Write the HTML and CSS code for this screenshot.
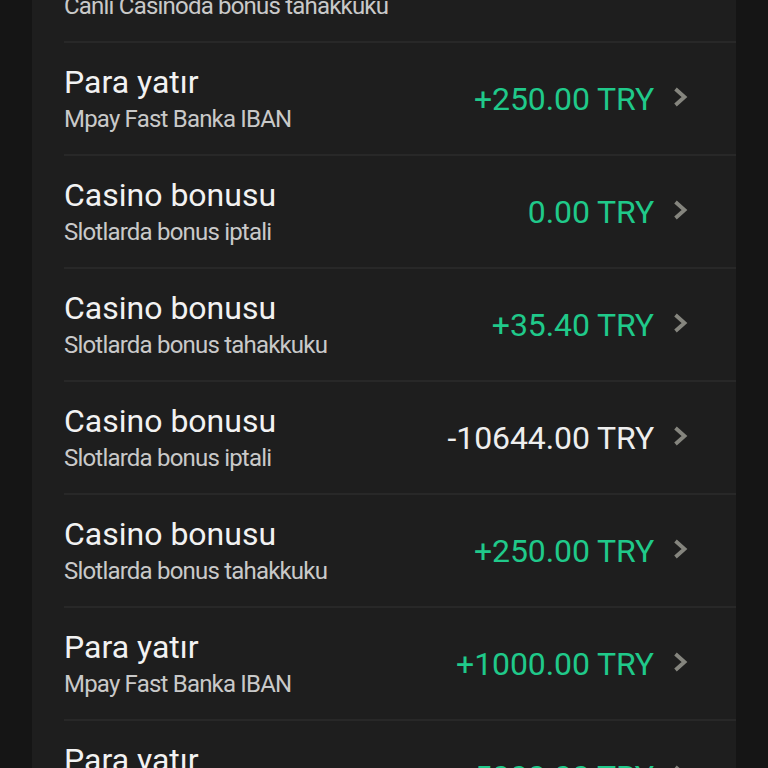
FILE: index.html
```html
<!DOCTYPE html>
<html lang="tr">
<head>
  <meta charset="UTF-8">
  <title>İşlem geçmişi</title>
  <link rel="stylesheet" href="styles.css">
</head>
<body>

<div class="panel">
  <ul class="tx-list">
    <li class="tx">
      <div class="tx-info">
        <div class="tx-title">Casino bonusu</div>
        <div class="tx-sub">Canlı Casinoda bonus tahakkuku</div>
      </div>
      <div class="tx-amount plus">+100.00 TRY</div>
      <svg class="chev" viewBox="0 0 15 22"><polyline points="2.5,3 11.5,11 2.5,19"/></svg>
    </li>
    <li class="tx">
      <div class="tx-info">
        <div class="tx-title">Para yatır</div>
        <div class="tx-sub">Mpay Fast Banka IBAN</div>
      </div>
      <div class="tx-amount plus">+250.00 TRY</div>
      <svg class="chev" viewBox="0 0 15 22"><polyline points="2.5,3 11.5,11 2.5,19"/></svg>
    </li>
    <li class="tx">
      <div class="tx-info">
        <div class="tx-title">Casino bonusu</div>
        <div class="tx-sub">Slotlarda bonus iptali</div>
      </div>
      <div class="tx-amount plus">0.00 TRY</div>
      <svg class="chev" viewBox="0 0 15 22"><polyline points="2.5,3 11.5,11 2.5,19"/></svg>
    </li>
    <li class="tx">
      <div class="tx-info">
        <div class="tx-title">Casino bonusu</div>
        <div class="tx-sub">Slotlarda bonus tahakkuku</div>
      </div>
      <div class="tx-amount plus">+35.40 TRY</div>
      <svg class="chev" viewBox="0 0 15 22"><polyline points="2.5,3 11.5,11 2.5,19"/></svg>
    </li>
    <li class="tx">
      <div class="tx-info">
        <div class="tx-title">Casino bonusu</div>
        <div class="tx-sub">Slotlarda bonus iptali</div>
      </div>
      <div class="tx-amount">-10644.00 TRY</div>
      <svg class="chev" viewBox="0 0 15 22"><polyline points="2.5,3 11.5,11 2.5,19"/></svg>
    </li>
    <li class="tx">
      <div class="tx-info">
        <div class="tx-title">Casino bonusu</div>
        <div class="tx-sub">Slotlarda bonus tahakkuku</div>
      </div>
      <div class="tx-amount plus">+250.00 TRY</div>
      <svg class="chev" viewBox="0 0 15 22"><polyline points="2.5,3 11.5,11 2.5,19"/></svg>
    </li>
    <li class="tx">
      <div class="tx-info">
        <div class="tx-title">Para yatır</div>
        <div class="tx-sub">Mpay Fast Banka IBAN</div>
      </div>
      <div class="tx-amount plus">+1000.00 TRY</div>
      <svg class="chev" viewBox="0 0 15 22"><polyline points="2.5,3 11.5,11 2.5,19"/></svg>
    </li>
    <li class="tx">
      <div class="tx-info">
        <div class="tx-title">Para yatır</div>
        <div class="tx-sub">Mpay Fast Banka IBAN</div>
      </div>
      <div class="tx-amount plus">+5000.00 TRY</div>
      <svg class="chev" viewBox="0 0 15 22"><polyline points="2.5,3 11.5,11 2.5,19"/></svg>
    </li>
  </ul>
</div>

</body>
</html>
```

FILE: styles.css
```css
html, body {
  height: 100%;
}
body {
  margin: 0;
  background-color: #151515;
  font-family: Roboto, 'Noto Sans', sans-serif;
  color: #f0f0f0;
  overflow: hidden;
}
.panel {
  margin: 0 32px;
  min-height: 100%;
  background-color: #1e1e1e;
}
.tx-list {
  list-style: none;
  margin: -72px 0 0;
  padding: 0;
}
.tx {
  display: flex;
  align-items: center;
  height: 111px;
  margin-left: 32px;
  padding-right: 48px;
  border-top: 2px solid #282828;
}
.tx-info {
  flex: 1;
  padding-top: 4px;
}
.tx-title {
  font-size: 32px;
  line-height: 36px;
  color: #f2f2f2;
}
.tx-sub {
  font-size: 24px;
  line-height: 38px;
  color: #c9c9c9;
  letter-spacing: -0.8px;
}
.tx-amount {
  font-size: 32px;
  line-height: 38px;
  color: #eeeeee;
  letter-spacing: -0.1px;
}
.tx-amount.plus {
  color: #20c98a;
}
.chev {
  width: 15px;
  height: 22px;
  margin-left: 19px;
  margin-top: -4px;
  fill: none;
  stroke: #85857e;
  stroke-width: 3.8;
}
```
